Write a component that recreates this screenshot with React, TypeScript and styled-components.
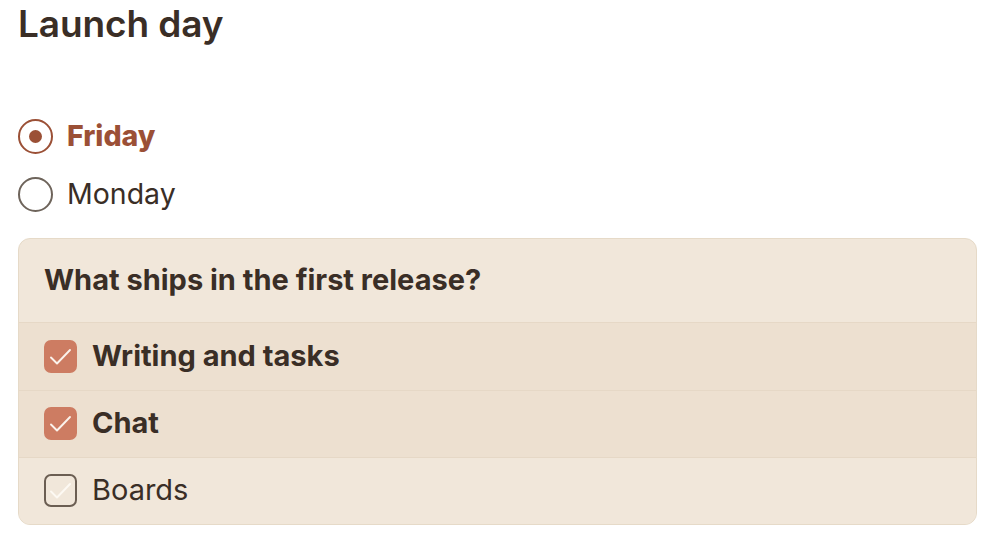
import styled, { createGlobalStyle } from "styled-components";

const GlobalStyle = createGlobalStyle`
  html, body {
    margin: 0;
    padding: 0;
    background: #ffffff;
  }
  body {
    font-family: Inter, "Noto Sans", sans-serif;
    color: #3a2e26;
  }
  *, *::before, *::after {
    box-sizing: border-box;
  }
`;

const Page = styled.div`
  padding: 0 16px 0 18px;
`;

const Title = styled.h1`
  margin: 0;
  padding-top: 1px;
  font-size: 37px;
  line-height: 46px;
  font-weight: 600;
  letter-spacing: -0.1px;
  color: #3a2e26;
`;

const RadioGroup = styled.div`
  display: flex;
  flex-direction: column;
  gap: 22px;
  margin-top: 71px;
`;

const RadioRow = styled.label`
  display: flex;
  align-items: center;
  gap: 14px;
  height: 36px;
`;

const RadioCircle = styled.span<{ $checked: boolean }>`
  width: 35px;
  height: 35px;
  border-radius: 50%;
  border: 2px solid ${(p) => (p.$checked ? "#9b5036" : "#6e645b")};
  display: flex;
  align-items: center;
  justify-content: center;

  &::after {
    content: "";
    display: ${(p) => (p.$checked ? "block" : "none")};
    width: 13px;
    height: 13px;
    border-radius: 50%;
    background: #9b5036;
  }
`;

const RadioLabel = styled.span<{ $checked: boolean }>`
  font-size: 28.5px;
  font-weight: ${(p) => (p.$checked ? 800 : 400)};
  color: ${(p) => (p.$checked ? "#9b5036" : "#3a2e26")};
  padding-bottom: 2px;
`;

const Card = styled.div`
  margin-top: 26px;
  border: 1.5px solid #e6dac8;
  border-radius: 12px;
  background: #f1e7da;
  overflow: hidden;
`;

const CardHeader = styled.div`
  height: 84px;
  display: flex;
  align-items: center;
  padding: 0 0 3px 25px;
  font-size: 29px;
  font-weight: 700;
  color: #3a2e26;
  border-bottom: 1.5px solid #e6d8c6;
`;

const Row = styled.div<{ $checked: boolean }>`
  height: 67px;
  display: flex;
  align-items: center;
  gap: 15px;
  padding-left: 25px;
  background: ${(p) => (p.$checked ? "#ede0d0" : "#f1e7da")};
  & + & {
    border-top: 1.5px solid #e6d8c6;
  }
`;

const Box = styled.span<{ $checked: boolean }>`
  width: 33px;
  height: 33px;
  border-radius: 7px;
  position: relative;
  flex-shrink: 0;
  margin-top: -1px;
  background: ${(p) => (p.$checked ? "#cd7c62" : "transparent")};
  border: 2px solid ${(p) => (p.$checked ? "#cd7c62" : "#6b5e52")};

  svg {
    position: absolute;
    left: -2px;
    top: -2px;
    width: 33px;
    height: 33px;
    stroke: ${(p) => (p.$checked ? "#fbf3ec" : "#fdf9f3")};
    stroke-width: 1.9;
    fill: none;
    stroke-linecap: round;
    stroke-linejoin: round;
  }
`;

const RowLabel = styled.span<{ $checked: boolean }>`
  font-size: 29px;
  font-weight: ${(p) => (p.$checked ? 700 : 400)};
  color: #3a2e26;
  padding-bottom: 3px;
`;

const days = [
  { label: "Friday", checked: true },
  { label: "Monday", checked: false },
];

const features = [
  { label: "Writing and tasks", checked: true },
  { label: "Chat", checked: true },
  { label: "Boards", checked: false },
];

function Check() {
  return (
    <svg viewBox="0 0 33 33">
      <path d="M7 17.5 L13 23.5 L26 10" />
    </svg>
  );
}

export default function App() {
  return (
    <Page>
      <GlobalStyle />
      <Title>Launch day</Title>
      <RadioGroup>
        {days.map((d) => (
          <RadioRow key={d.label}>
            <RadioCircle $checked={d.checked} />
            <RadioLabel $checked={d.checked}>{d.label}</RadioLabel>
          </RadioRow>
        ))}
      </RadioGroup>
      <Card>
        <CardHeader>What ships in the first release?</CardHeader>
        {features.map((f) => (
          <Row key={f.label} $checked={f.checked}>
            <Box $checked={f.checked}>
              <Check />
            </Box>
            <RowLabel $checked={f.checked}>{f.label}</RowLabel>
          </Row>
        ))}
      </Card>
    </Page>
  );
}
